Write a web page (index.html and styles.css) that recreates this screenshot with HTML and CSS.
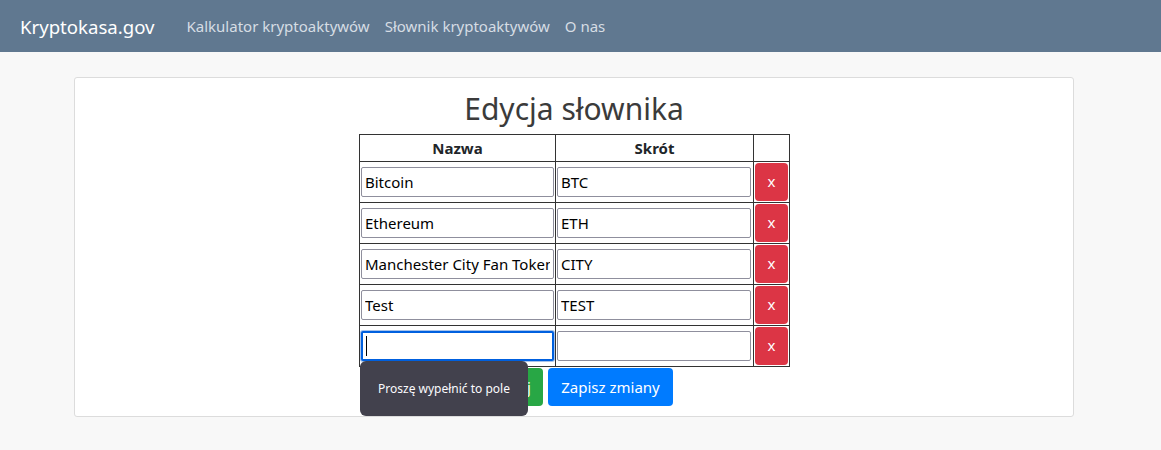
FILE: index.html
```html
<!DOCTYPE html>
<html lang="pl">
<head>
<meta charset="utf-8">
<title>Kryptokasa.gov</title>
<link rel="stylesheet" href="styles.css">
</head>
<body>
<nav class="navbar">
  <a class="brand" href="#">Kryptokasa.gov</a>
  <div class="nav-links">
    <a class="nav-link" href="#">Kalkulator kryptoaktywów</a>
    <a class="nav-link" href="#">Słownik kryptoaktywów</a>
    <a class="nav-link" href="#">O nas</a>
  </div>
</nav>
<main class="main">
  <section class="card">
    <h1 class="title">Edycja słownika</h1>
    <div class="editor">
      <table class="dict">
        <thead>
          <tr><th class="col-name">Nazwa</th><th class="col-abbr">Skrót</th><th class="col-act"></th></tr>
        </thead>
        <tbody>
          <tr><td><input class="field" value="Bitcoin"></td><td><input class="field" value="BTC"></td><td><button class="btn-del">x</button></td></tr>
          <tr><td><input class="field" value="Ethereum"></td><td><input class="field" value="ETH"></td><td><button class="btn-del">x</button></td></tr>
          <tr><td><input class="field" value="Manchester City Fan Token"></td><td><input class="field" value="CITY"></td><td><button class="btn-del">x</button></td></tr>
          <tr><td><input class="field" value="Test"></td><td><input class="field" value="TEST"></td><td><button class="btn-del">x</button></td></tr>
          <tr><td><input class="field field-focus" value=""><span class="caret"></span></td><td><input class="field" value=""></td><td><button class="btn-del">x</button></td></tr>
        </tbody>
      </table>
      <div class="actions">
        <button class="btn btn-green">Dodaj</button>
        <button class="btn btn-blue">Zapisz zmiany</button>
      </div>
      <div class="tooltip">Proszę wypełnić to pole</div>
    </div>
  </section>
</main>
</body>
</html>
```

FILE: styles.css
```css
* { box-sizing: border-box; }
html, body { margin: 0; padding: 0; }
body {
  background: #f8f8f8;
  font-family: "Noto Sans", "Open Sans", sans-serif;
  color: #212529;
  font-size: 15px;
  height: 450px;
  overflow: hidden;
}
.navbar {
  height: 52px;
  background: #607890;
  display: flex;
  align-items: center;
  padding: 0 20px;
}
.brand {
  color: #ffffff;
  font-size: 18.6px;
  text-decoration: none;
  margin-right: 32px;
}
.nav-links { display: flex; gap: 15px; }
.nav-link {
  color: #d6dde4;
  text-decoration: none;
  font-size: 15px;
}
.main { padding: 25px 0 0 74px; }
.card {
  width: 1000px;
  background: #ffffff;
  border: 1px solid #dcdcdc;
  border-radius: 3px;
  padding: 12px 0 10px;
  display: flex;
  flex-direction: column;
  align-items: center;
}
.title {
  margin: 0 0 6px;
  font-size: 30px;
  font-weight: 400;
  line-height: 38px;
  color: #3b3b3b;
}
.editor { position: relative; width: 430px; }
.dict {
  border-collapse: collapse;
  width: 430px;
  table-layout: fixed;
}
.dict th, .dict td {
  border: 1px solid #333333;
  padding: 1px;
  vertical-align: middle;
}
.dict th { font-weight: 700; height: 27px; padding: 0; font-size: 15px; }
.col-name { width: 196px; }
.col-abbr { width: 198px; }
.col-act { width: 36px; }
.dict td { position: relative; }
.field {
  display: block;
  width: 100%;
  height: 30px;
  border: 1px solid #8f8f9d;
  border-radius: 2px;
  padding: 0 3px;
  font: inherit;
  font-size: 15px;
  color: #000;
  background: #fff;
  outline: none;
}
.dict td:nth-child(2) .field { width: calc(100% - 1px); }
.field-focus {
  border: 2px solid #0060df;
  box-shadow: 0 0 0 1px #a8c3ea;
}
.caret {
  position: absolute;
  left: 6px;
  top: 10px;
  width: 1px;
  height: 20px;
  background: #000;
}
.btn-del {
  display: block;
  width: 33px;
  height: 38px;
  border: none;
  border-radius: 4px;
  background: #dc3545;
  color: #fff;
  font: inherit;
  font-size: 15px;
  padding: 0 0 2px;
}
.actions {
  display: flex;
  gap: 5px;
  padding: 1px 0 0 1px;
}
.btn {
  height: 38px;
  border: none;
  border-radius: 4px;
  color: #fff;
  font: inherit;
  font-size: 15px;
  padding: 0 12px;
}
.btn-green { background: #28a745; width: 183px; text-align: right; }
.btn-blue { background: #007bff; width: 125px; }
.tooltip {
  position: absolute;
  left: 1px;
  top: 227px;
  width: 168px;
  height: 55px;
  border-radius: 6px;
  background: #42414d;
  color: #fbfbfe;
  font-size: 12px;
  display: flex;
  align-items: center;
  justify-content: center;
}
```
